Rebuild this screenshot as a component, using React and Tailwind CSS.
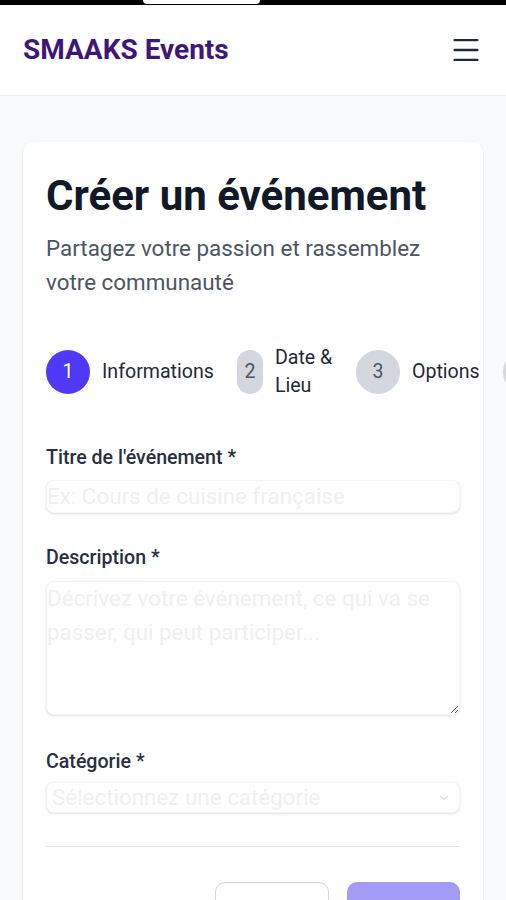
import { Menu, ChevronDown } from "lucide-react";

const steps = [
    { n: 1, label: "Informations", active: true },
    { n: 2, label: "Date & Lieu", narrow: true },
    { n: 3, label: "Options" },
    { n: 4, label: "Confirmation" },
];

function Step({ step }) {
    const circle = step.active
        ? "bg-[#4f39f6] text-white w-[44px]"
        : step.narrow
            ? "bg-[#d4d7dd] text-[#4b5563] w-[26px]"
            : "bg-[#d4d7dd] text-[#4b5563] w-[44px]";
    return (
        <div className="flex items-center gap-[12px] shrink-0">
            <div className={"h-[44px] rounded-full flex items-center justify-center text-[19.6px] shrink-0 " + circle}>
                {step.n}
            </div>
            {step.narrow ? (
                <span className="w-[58px] text-[19.6px] leading-[28px] text-[#1f2937]">{step.label}</span>
            ) : (
                <span className="whitespace-nowrap text-[19.6px] leading-[28px] text-[#1f2937]">{step.label}</span>
            )}
        </div>
    );
}

export default function App() {
    return (
        <div className="min-h-screen w-full overflow-x-hidden bg-[#f8fafc] font-['Roboto',sans-serif]">
            <div className="h-[5px] bg-black">
                <div className="ml-[143px] w-[117px] h-[4px] bg-white rounded-b-full"></div>
            </div>
            <header className="h-[91px] bg-white border-b border-[#eceef1] px-[23px] flex items-center justify-between">
                <span className="text-[28px] font-bold text-[#3f1778] leading-none">SMAAKS Events</span>
                <Menu size={34} strokeWidth={1.7} className="text-[#1f2937]" />
            </header>
            <main className="px-[23px] pt-[46px]">
                <section className="bg-white rounded-[11px] shadow-sm px-[23px] pt-[29px] pb-[30px]">
                    <h1 className="text-[42px] leading-[50px] font-bold text-[#111827]">Créer un événement</h1>
                    <p className="mt-[11px] text-[22.4px] leading-[33.6px] text-[#4b5563]">
                        Partagez votre passion et rassemblez votre communauté
                    </p>

                    <div className="mt-[45px] flex items-center gap-[23px] h-[56px]">
                        {steps.map((s) => <Step key={s.n} step={s} />)}
                    </div>

                    <label className="block mt-[44px] text-[19.6px] leading-[28px] font-medium text-[#27303f]">
                        Titre de l'événement *
                    </label>
                    <input
                        placeholder="Ex: Cours de cuisine française"
                        className="block w-full mt-[8px] h-[33px] p-0 text-[22.4px] leading-[33px] bg-white rounded-[8px] border border-[#f5f5f7] shadow-sm outline-none placeholder:text-[#efeff1]"
                    />

                    <label className="block mt-[31px] text-[19.6px] leading-[28px] font-medium text-[#27303f]">
                        Description *
                    </label>
                    <textarea
                        rows={4}
                        placeholder="Décrivez votre événement, ce qui va se passer, qui peut participer..."
                        className="block w-full mt-[9px] h-[134px] p-0 text-[22.4px] leading-[33.6px] bg-white rounded-[8px] border border-[#f5f5f7] shadow-sm outline-none placeholder:text-[#efeff1]"
                    ></textarea>

                    <label className="block mt-[33px] text-[19.6px] leading-[28px] font-medium text-[#27303f]">
                        Catégorie *
                    </label>
                    <div className="mt-[6px] h-[31px] w-full flex items-center justify-between pl-[5px] pr-[8px] bg-white rounded-[8px] border border-[#f5f5f7] shadow-sm">
                        <span className="text-[22.4px] leading-none text-[#efeff1]">Sélectionnez une catégorie</span>
                        <ChevronDown size={14} className="text-[#dcdee2]" />
                    </div>

                    <div className="mt-[33px] border-t border-[#e5e7eb] pt-[35px] flex justify-end gap-[18px]">
                        <button className="w-[114px] py-[13px] rounded-[10px] border border-[#d1d5db] bg-white text-[19.6px] leading-[28px] font-medium text-[#374151]">
                            Annuler
                        </button>
                        <button className="w-[113px] py-[13px] rounded-[10px] bg-[#a49bf6] text-[19.6px] leading-[28px] font-medium text-white">
                            Suivant
                        </button>
                    </div>
                </section>
            </main>
        </div>
    );
}
